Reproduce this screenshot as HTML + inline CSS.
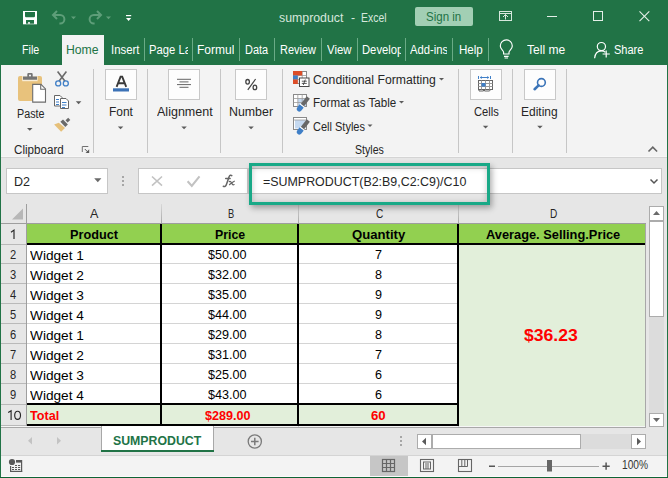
<!DOCTYPE html>
<html><head><meta charset="utf-8">
<style>
*{margin:0;padding:0;box-sizing:border-box}
html,body{width:668px;height:478px;overflow:hidden;background:#e6e6e6;font-family:"Liberation Sans",sans-serif}
.a{position:absolute}
.t{position:absolute;white-space:nowrap;line-height:1}
</style></head><body>
<div class="a" style="left:0px;top:0px;width:668px;height:65px;background:#217346;"></div>
<svg class="a" style="left:0;top:0" width="668" height="65">
 <rect x="23" y="11" width="14" height="13.3" fill="#fff"/>
 <path d="M25 12h10v4.4l-0.8 0.8h-8.4l-0.8-0.8z" fill="#217346"/>
 <rect x="26" y="20" width="8" height="3.7" fill="#217346"/>
 <rect x="28" y="22.2" width="2" height="1.5" fill="#fff"/>
 <g fill="none" stroke="#5e9e79" stroke-width="2">
  <path d="M53 15h7.2a4.2 4.2 0 0 1 0 8.4h-0.8"/>
  <path d="M57 11l-4 4 4 4"/>
  <path d="M101 15h-7.2a4.2 4.2 0 0 0 0 8.4h0.8"/>
  <path d="M97 11l4 4-4 4"/>
 </g>
 <path d="M71 16.5h5l-2.5 2.8z" fill="#5e9e79"/>
 <path d="M106 16.5h5l-2.5 2.8z" fill="#5e9e79"/>
 <rect x="126" y="15" width="5.2" height="1.2" fill="#fff"/>
 <path d="M126 18h5.2l-2.6 3.1z" fill="#fff"/>
 <rect x="499.5" y="11.5" width="12" height="9" fill="none" stroke="#d6e8dd" stroke-width="1"/>
 <path d="M503 17l2.5-2.5 2.5 2.5M505.5 14.5v5" fill="none" stroke="#d6e8dd" stroke-width="1"/>
 <rect x="499.5" y="13" width="12" height="1" fill="#d6e8dd"/>
 <rect x="547" y="16" width="10" height="1" fill="#e4efe8"/>
 <rect x="593.5" y="11.5" width="9" height="9" fill="none" stroke="#e4efe8" stroke-width="1"/>
 <path d="M639.5 11.3l9.8 9.8M649.3 11.3l-9.8 9.8" stroke="#e4efe8" stroke-width="1.1"/>
 <rect x="62" y="35" width="42" height="30" fill="#f3f3f3"/>
 <g fill="#6aab86">
  <rect x="144" y="38" width="1" height="23"/>
  <rect x="192" y="38" width="1" height="23"/>
  <rect x="239" y="38" width="1" height="23"/>
  <rect x="274" y="38" width="1" height="23"/>
  <rect x="321" y="38" width="1" height="23"/>
  <rect x="357" y="38" width="1" height="23"/>
  <rect x="405" y="38" width="1" height="23"/>
  <rect x="452" y="38" width="1" height="23"/>
  <rect x="488" y="38" width="1" height="23"/>
 </g>
 <g fill="none" stroke="#fff" stroke-width="1.15">
  <path d="M503.6 54v-1.8c0-1.6-3.3-3.2-3.3-6.3a6 6 0 0 1 12 0c0 3.1-3.3 4.7-3.3 6.3v1.8z"/>
  <path d="M504 56.3h4.6M504.6 58h3.4"/>
 </g>
 <g fill="none" stroke="#fff" stroke-width="1.2">
  <circle cx="601.4" cy="46.6" r="4.1"/>
  <path d="M594.6 58.2c0.4-4.6 3.2-7.4 6.8-7.4c1.6 0 3 0.5 4 1.4"/>
  <path d="M602.6 54h7.2M606.2 50.4v7.2"/>
 </g>
</svg>
<div class="t" style="left:279px;top:12.00px;font-size:12px;color:#d7e7dd;transform:scaleX(1.0273);transform-origin:0 0;">sumproduct</div>
<div class="t" style="left:351.4px;top:12.00px;font-size:12px;color:#d7e7dd;transform:scaleX(1.0261);transform-origin:0 0;">-</div>
<div class="t" style="left:361.3px;top:12.00px;font-size:12px;color:#d7e7dd;transform:scaleX(0.8690);transform-origin:0 0;">Excel</div>
<div class="a" style="left:415px;top:7px;width:58px;height:19px;background:#a2cfb4;border-radius:2px;"></div>
<div class="t" style="left:426.2px;top:11.00px;font-size:12.5px;color:#217346;transform:scaleX(0.9210);transform-origin:0 0;">Sign&nbsp;in</div>
<div class="t" style="left:21.6px;top:44.00px;font-size:12.5px;color:#fff;transform:scaleX(0.8540);transform-origin:0 0;">File</div>
<div class="t" style="left:66.4px;top:44.00px;font-size:12.5px;color:#217346;transform:scaleX(0.9778);transform-origin:0 0;">Home</div>
<div class="t" style="left:110.5px;top:44.00px;font-size:12.5px;color:#fff;transform:scaleX(0.9085);transform-origin:0 0;">Insert</div>
<div class="a" style="left:149.4px;top:35px;width:38.599999999999994px;height:30px;overflow:hidden"><div class="t" style="left:0px;top:9.00px;font-size:12.5px;color:#fff;transform:scaleX(0.9000);transform-origin:0 0;">Page&nbsp;Layout</div>
</div>
<div class="a" style="left:197.3px;top:35px;width:37.099999999999994px;height:30px;overflow:hidden"><div class="t" style="left:0px;top:9.00px;font-size:12.5px;color:#fff;transform:scaleX(0.9600);transform-origin:0 0;">Formulas</div>
</div>
<div class="t" style="left:245.2px;top:44.00px;font-size:12.5px;color:#fff;transform:scaleX(0.8749);transform-origin:0 0;">Data</div>
<div class="t" style="left:279.6px;top:44.00px;font-size:12.5px;color:#fff;transform:scaleX(0.8759);transform-origin:0 0;">Review</div>
<div class="t" style="left:326.9px;top:44.00px;font-size:12.5px;color:#fff;transform:scaleX(0.9119);transform-origin:0 0;">View</div>
<div class="a" style="left:362.2px;top:35px;width:38.400000000000034px;height:30px;overflow:hidden"><div class="t" style="left:0px;top:9.00px;font-size:12.5px;color:#fff;transform:scaleX(0.9000);transform-origin:0 0;">Developer</div>
</div>
<div class="a" style="left:410.1px;top:35px;width:36.69999999999999px;height:30px;overflow:hidden"><div class="t" style="left:0px;top:9.00px;font-size:12.5px;color:#fff;transform:scaleX(0.9000);transform-origin:0 0;">Add-ins</div>
</div>
<div class="t" style="left:458.8px;top:44.00px;font-size:12.5px;color:#fff;transform:scaleX(0.9258);transform-origin:0 0;">Help</div>
<div class="t" style="left:526.7px;top:44.00px;font-size:12.5px;color:#fff;transform:scaleX(0.9648);transform-origin:0 0;">Tell&nbsp;me</div>
<div class="t" style="left:613.8px;top:44.00px;font-size:12.5px;color:#fff;transform:scaleX(0.8815);transform-origin:0 0;">Share</div>
<div class="a" style="left:1px;top:65px;width:666px;height:92px;background:#f3f3f3;"></div>
<div class="a" style="left:1px;top:156px;width:666px;height:1px;background:#f7f7f7;"></div>
<div class="a" style="left:1px;top:157px;width:666px;height:1px;background:#d4d4d4;"></div>
<div class="a" style="left:93px;top:69px;width:1px;height:84px;background:#c6c6c6;"></div>
<div class="a" style="left:147px;top:69px;width:1px;height:84px;background:#c6c6c6;"></div>
<div class="a" style="left:220px;top:69px;width:1px;height:84px;background:#c6c6c6;"></div>
<div class="a" style="left:282px;top:69px;width:1px;height:84px;background:#c6c6c6;"></div>
<div class="a" style="left:458px;top:69px;width:1px;height:84px;background:#c6c6c6;"></div>
<div class="a" style="left:512px;top:69px;width:1px;height:84px;background:#c6c6c6;"></div>
<div class="a" style="left:566px;top:69px;width:1px;height:84px;background:#c6c6c6;"></div>
<div class="a" style="left:105px;top:69px;width:32px;height:31px;background:#fdfdfd;border:1px solid #c8c8c8;"></div>
<div class="a" style="left:168px;top:69px;width:32px;height:31px;background:#fdfdfd;border:1px solid #c8c8c8;"></div>
<div class="a" style="left:235px;top:69px;width:32px;height:31px;background:#fdfdfd;border:1px solid #c8c8c8;"></div>
<div class="a" style="left:470px;top:69px;width:32px;height:31px;background:#fdfdfd;border:1px solid #c8c8c8;"></div>
<div class="a" style="left:524px;top:69px;width:32px;height:31px;background:#fdfdfd;border:1px solid #c8c8c8;"></div>
<svg class="a" style="left:0;top:0" width="668" height="160">
 <!-- paste -->
 <rect x="18" y="76" width="24" height="25" rx="2" fill="#e8c27c"/>
 <rect x="22.2" y="76" width="15.4" height="5.2" fill="#f7ecd6"/>
 <path d="M23 79.8v-3.4h4.3v-2.2a1.2 1.2 0 0 1 1.2-1.2h3a1.2 1.2 0 0 1 1.2 1.2v2.2h4.3v3.4z" fill="#757575"/>
 <circle cx="30" cy="75.6" r="1" fill="#fff"/>
 <path d="M32.7 84.4h8.3l4.5 4.5v13.2h-12.8z" fill="#fff" stroke="#6d6d6d" stroke-width="1.1"/>
 <path d="M40.7 84.4v4.8h4.8" fill="none" stroke="#6d6d6d" stroke-width="1.1"/>
 <!-- scissors -->
 <path d="M57.6 71.5l7.6 10M66.4 71.5l-7.6 10" stroke="#6a6a6a" stroke-width="1.6" fill="none"/>
 <circle cx="58.2" cy="83.4" r="2.5" fill="#f3f3f3" stroke="#3f7fc7" stroke-width="1.3"/>
 <circle cx="65.8" cy="83.4" r="2.5" fill="#f3f3f3" stroke="#3f7fc7" stroke-width="1.3"/>
 <!-- copy -->
 <path d="M54.5 95.5h5.5l2 2v8.5h-7.5z" fill="#fff" stroke="#666" stroke-width="1"/>
 <path d="M60.5 98.5h5.5l2.5 2.5v7.5h-8z" fill="#fff" stroke="#666" stroke-width="1"/>
 <rect x="56" y="99" width="3" height="1" fill="#3f7fc7"/>
 <rect x="56" y="101.5" width="3" height="1" fill="#3f7fc7"/>
 <rect x="56" y="104" width="3" height="1" fill="#3f7fc7"/>
 <rect x="62" y="102" width="4.5" height="1" fill="#3f7fc7"/>
 <rect x="62" y="104.5" width="4.5" height="1" fill="#3f7fc7"/>
 <rect x="62" y="107" width="3" height="1" fill="#3f7fc7"/>
 <path d="M75.8 101.2h5.6l-2.8 3.1z" fill="#5c5c5c"/>
 <!-- format painter -->
 <path d="M54.1 124.4L58.8 122.8L65 128L61.1 131.7Z" fill="#e6c07a"/>
 <path d="M60.4 121.8L63 119.6L67.9 124.6L65.3 126.9Z" fill="#6a6a6a"/>
 <path d="M65.5 120.2L68.2 117.8L70.3 120L67.6 122.4Z" fill="#6a6a6a"/>
 <!-- paste caret -->
 <path d="M27 128h5.5l-2.75 2.8z" fill="#5c5c5c"/>
 <!-- launcher -->
 <path d="M82.3 152v-5.5h6" fill="none" stroke="#707070" stroke-width="1"/><path d="M89.2 149.3v3.6h-3.6z" fill="#5a5a5a"/><path d="M84.8 149l3.3 3.3" stroke="#5a5a5a" stroke-width="1"/>
 <!-- font A -->
 <path d="M116.6 86.8l4-10.2h1.6l4 10.2M118.4 83.2h6" fill="none" stroke="#3a3a3a" stroke-width="1.9"/>
 <rect x="113" y="88.3" width="16" height="3.2" fill="#3c72b6"/>
 <path d="M117.8 126.5h5.5l-2.75 2.8z" fill="#5c5c5c"/>
 <!-- alignment lines -->
 <path d="M177 79.3h14M179.5 81.9h9M177 84.6h14M179.5 87.3h9" stroke="#555" stroke-width="0.9"/>
 <path d="M181.3 126.5h5.5l-2.75 2.8z" fill="#5c5c5c"/>
 <!-- number % -->
 <path d="M247.8 89.8l7.8-10.8" stroke="#444" stroke-width="1.2"/>
 <ellipse cx="247.6" cy="81.8" rx="1.8" ry="2.3" fill="none" stroke="#444" stroke-width="1.3"/>
 <ellipse cx="254.9" cy="87.4" rx="1.8" ry="2.3" fill="none" stroke="#444" stroke-width="1.3"/>
 <path d="M248.3 126.5h5.5l-2.75 2.8z" fill="#5c5c5c"/>
 <!-- conditional formatting icon -->
 <rect x="293.5" y="71.5" width="13" height="12" fill="#fff" stroke="#8a8a8a" stroke-width="1"/>
 <path d="M297.8 71.5v12M302.2 71.5v12M293.5 75.5h13M293.5 79.5h13" stroke="#9a9a9a" stroke-width="0.8"/>
 <rect x="293" y="71" width="9.2" height="4.5" fill="#dc4d28"/>
 <rect x="293" y="75.5" width="4.8" height="4" fill="#3f7fc7"/>
 <rect x="293" y="79.5" width="4.8" height="4.5" fill="#dc4d28"/>
 <rect x="299.5" y="78" width="9.5" height="8.5" fill="#fff" stroke="#4a4a4a" stroke-width="1"/>
 <path d="M301.8 81.2h5M301.8 83.4h5M303.3 85l2-5.5" stroke="#333" stroke-width="0.8"/>
 <path d="M439 78h5l-2.5 2.6z" fill="#5c5c5c"/>
 <!-- format as table icon -->
 <rect x="293.5" y="94.5" width="13" height="12" fill="#fff" stroke="#8a8a8a" stroke-width="1"/>
 <rect x="298" y="98.5" width="8" height="7.5" fill="#c5d9f0"/>
 <path d="M297.8 94.5v12M302.2 94.5v12M293.5 98.5h13M293.5 102.5h13" stroke="#9a9a9a" stroke-width="0.8"/>
 <g transform="translate(300.5 107.5) rotate(-52)">
  <path d="M-4.5 0c0-2 1.5-2.6 3-2.6h3.5v5.2h-3.5c-1.5 0-3-0.6-3-2.6z" fill="#3f7fc7"/>
  <rect x="2" y="-2.6" width="1.2" height="5.2" fill="#fff"/>
  <rect x="3.2" y="-2" width="9.5" height="4" fill="#686868"/>
 </g>
 <path d="M399 101h5l-2.5 2.6z" fill="#5c5c5c"/>
 <!-- cell styles icon -->
 <rect x="293.5" y="117.5" width="13" height="12" fill="#fff" stroke="#8a8a8a" stroke-width="1"/>
 <rect x="295" y="120" width="10.5" height="8.5" fill="#c5d9f0"/>
 <path d="M293.5 120h13" stroke="#9a9a9a" stroke-width="0.8"/>
 <g transform="translate(300.5 130.5) rotate(-52)">
  <path d="M-4.5 0c0-2 1.5-2.6 3-2.6h3.5v5.2h-3.5c-1.5 0-3-0.6-3-2.6z" fill="#3f7fc7"/>
  <rect x="2" y="-2.6" width="1.2" height="5.2" fill="#fff"/>
  <rect x="3.2" y="-2" width="9.5" height="4" fill="#686868"/>
 </g>
 <path d="M367.5 124.5h5l-2.5 2.6z" fill="#5c5c5c"/>
 <!-- cells icon -->
 <path d="M478.5 76v3M490.5 76v3M480.5 77.5h8" stroke="#3f7fc7" stroke-width="1"/>
 <path d="M479.8 77.5l2-1.6v3.2zM489.2 77.5l-2-1.6v3.2z" fill="#3f7fc7"/>
 <rect x="478.5" y="80.5" width="14" height="9" fill="#fff" stroke="#666" stroke-width="1"/>
 <path d="M481.5 80.5v9M485.5 80.5v9M489.5 80.5v9M478.5 83.5h14M478.5 86.5h14" stroke="#9a9a9a" stroke-width="1"/>
 <rect x="481.5" y="83" width="4" height="3.6" fill="#3f7fc7"/>
 <path d="M479 89.5v1.5h4.5v-1.5M484.5 89.5v1.5h5l1-1.5" fill="none" stroke="#666" stroke-width="1"/>
 <path d="M482.8 125.8h5.5l-2.75 2.8z" fill="#5c5c5c"/>
 <!-- editing magnifier -->
 <circle cx="541.4" cy="82.5" r="3.9" fill="none" stroke="#3b74b8" stroke-width="1.6"/>
 <path d="M538.6 85.4l-4 3.8" stroke="#3b74b8" stroke-width="2.6" stroke-linecap="round"/>
 <path d="M537.2 125.8h5.5l-2.75 2.8z" fill="#5c5c5c"/>
 <!-- collapse -->
 <path d="M648.5 151.5l4.3-4.3 4.3 4.3" fill="none" stroke="#666" stroke-width="1.6"/>
</svg>
<div class="t" style="left:16.5px;top:108.00px;font-size:12.5px;color:#262626;transform:scaleX(0.8604);transform-origin:0 0;">Paste</div>
<div class="t" style="left:13.5px;top:144.00px;font-size:12.5px;color:#262626;transform:scaleX(0.9290);transform-origin:0 0;">Clipboard</div>
<div class="t" style="left:109.2px;top:106.00px;font-size:12.5px;color:#262626;transform:scaleX(0.9556);transform-origin:0 0;">Font</div>
<div class="t" style="left:156.5px;top:106.00px;font-size:12.5px;color:#262626;transform:scaleX(1.0021);transform-origin:0 0;">Alignment</div>
<div class="t" style="left:229.2px;top:106.00px;font-size:12.5px;color:#262626;transform:scaleX(0.9898);transform-origin:0 0;">Number</div>
<div class="t" style="left:312.9px;top:74.00px;font-size:12.5px;color:#262626;transform:scaleX(0.9766);transform-origin:0 0;">Conditional&nbsp;Formatting</div>
<div class="t" style="left:312.9px;top:97.00px;font-size:12.5px;color:#262626;transform:scaleX(0.9286);transform-origin:0 0;">Format&nbsp;as&nbsp;Table</div>
<div class="t" style="left:312.9px;top:121.00px;font-size:12.5px;color:#262626;transform:scaleX(0.8807);transform-origin:0 0;">Cell&nbsp;Styles</div>
<div class="t" style="left:354.9px;top:144.00px;font-size:12.5px;color:#262626;transform:scaleX(0.8461);transform-origin:0 0;">Styles</div>
<div class="t" style="left:473.5px;top:106.00px;font-size:12.5px;color:#262626;transform:scaleX(0.8926);transform-origin:0 0;">Cells</div>
<div class="t" style="left:521.1px;top:106.00px;font-size:12.5px;color:#262626;transform:scaleX(0.9576);transform-origin:0 0;">Editing</div>
<div class="a" style="left:1px;top:158px;width:666px;height:47px;background:#e6e6e6;"></div>
<div class="a" style="left:6px;top:168px;width:102px;height:26px;background:#fff;border:1px solid #c6c6c6;"></div>
<div class="t" style="left:13.5px;top:175.00px;font-size:13px;color:#262626;transform:scaleX(0.9628);transform-origin:0 0;">D2</div>
<svg class="a" style="left:0;top:157px" width="668" height="48">
 <path d="M94.2 21.3h7.2l-3.6 4z" fill="#6a6a6a"/>
 <rect x="122" y="19" width="2" height="2" fill="#a6a6a6"/>
 <rect x="122" y="23" width="2" height="2" fill="#a6a6a6"/>
 <rect x="122" y="27" width="2" height="2" fill="#a6a6a6"/>
</svg>
<div class="a" style="left:138px;top:168px;width:110px;height:26px;background:#fff;border:1px solid #c6c6c6;"></div>
<svg class="a" style="left:0;top:157px" width="668" height="48">
 <path d="M152 19.5l10 9.2M162 19.5l-10 9.2" stroke="#c2c2c2" stroke-width="1.6"/>
 <path d="M187.6 24.3l4.2 4.6 7.7-9.6" fill="none" stroke="#c2c2c2" stroke-width="2.1"/>
</svg>
<svg class="a" style="left:0;top:0" width="668" height="200"><g fill="none" stroke="#666" stroke-linecap="round"><path d="M223.3 186.3c1.3 0.6 2.6 0 3.2-2l2.6-7.6c0.6-1.6 1.8-1.9 2.7-1.1" stroke-width="1.5"/><path d="M225.6 178.5h4.6" stroke-width="1.3"/><path d="M229.3 181.6c0.9-0.5 1.5 0 1.9 0.8l1.3 2c0.4 0.6 1 0.6 1.6 0.2M234.3 181.2c-1.8 0.8-3.2 2.2-4.8 3.5" stroke-width="1.25"/></g></svg>
<div class="a" style="left:248px;top:168px;width:414px;height:26px;background:#fff;border:1px solid #c6c6c6;"></div>
<div class="t" style="left:263.2px;top:175.00px;font-size:13px;color:#262626;transform:scaleX(0.9556);transform-origin:0 0;">=SUMPRODUCT(B2:B9,C2:C9)/C10</div>
<svg class="a" style="left:640px;top:170px" width="25" height="22"><path d="M10.5 9.5l3.5 3.5 3.5-3.5" fill="none" stroke="#555" stroke-width="1.5"/></svg>
<div class="a" style="left:1px;top:204px;width:645px;height:20px;background:#e6e6e6;"></div>
<div class="a" style="left:1px;top:224px;width:26px;height:203px;background:#e6e6e6;"></div>
<div class="a" style="left:27px;top:224px;width:618px;height:203px;background:#fff;"></div>
<svg class="a" style="left:0;top:204px" width="30" height="20"><path d="M23 4.5v11h-11z" fill="#b7b7b7"/></svg>
<div class="a" style="left:1px;top:223px;width:645px;height:1px;background:#9e9e9e;"></div>
<div class="a" style="left:26px;top:204px;width:1px;height:223px;background:#9e9e9e;"></div>
<div class="a" style="left:27px;top:426px;width:618px;height:1px;background:#fff;"></div>
<div class="a" style="left:161px;top:204px;width:1px;height:19px;background:linear-gradient(#d8d8d8,#a9a9a9);"></div>
<div class="a" style="left:298px;top:204px;width:1px;height:19px;background:linear-gradient(#d8d8d8,#a9a9a9);"></div>
<div class="a" style="left:458px;top:204px;width:1px;height:19px;background:linear-gradient(#d8d8d8,#a9a9a9);"></div>
<div class="t" style="left:89.9px;top:207.00px;font-size:13px;color:#262626;transform:scaleX(0.9687);transform-origin:0 0;">A</div>
<div class="t" style="left:227.6px;top:207.00px;font-size:13px;color:#262626;transform:scaleX(0.7150);transform-origin:0 0;">B</div>
<div class="t" style="left:375.75px;top:207.00px;font-size:13px;color:#262626;transform:scaleX(0.7776);transform-origin:0 0;">C</div>
<div class="t" style="left:549.65px;top:207.00px;font-size:13px;color:#262626;transform:scaleX(0.7776);transform-origin:0 0;">D</div>
<div class="a" style="left:1px;top:244px;width:25px;height:1px;background:#b9b9b9;"></div>
<div class="a" style="left:1px;top:263px;width:25px;height:1px;background:#b9b9b9;"></div>
<div class="a" style="left:1px;top:283px;width:25px;height:1px;background:#b9b9b9;"></div>
<div class="a" style="left:1px;top:303px;width:25px;height:1px;background:#b9b9b9;"></div>
<div class="a" style="left:1px;top:323px;width:25px;height:1px;background:#b9b9b9;"></div>
<div class="a" style="left:1px;top:343px;width:25px;height:1px;background:#b9b9b9;"></div>
<div class="a" style="left:1px;top:363px;width:25px;height:1px;background:#b9b9b9;"></div>
<div class="a" style="left:1px;top:383px;width:25px;height:1px;background:#b9b9b9;"></div>
<div class="a" style="left:1px;top:404px;width:25px;height:1px;background:#b9b9b9;"></div>
<div class="a" style="left:1px;top:425px;width:25px;height:1px;background:#b9b9b9;"></div>
<div class="a" style="left:1px;top:426px;width:645px;height:1px;background:#f6f6f6;"></div>
<div class="a" style="left:1px;top:427px;width:645px;height:1px;background:#a8a8a8;"></div>
<div class="a" style="left:27px;top:224px;width:618px;height:19px;background:#92d050;"></div>
<div class="a" style="left:27px;top:263px;width:431px;height:1px;background:#d4d4d4;"></div>
<div class="a" style="left:27px;top:283px;width:431px;height:1px;background:#d4d4d4;"></div>
<div class="a" style="left:27px;top:303px;width:431px;height:1px;background:#d4d4d4;"></div>
<div class="a" style="left:27px;top:323px;width:431px;height:1px;background:#d4d4d4;"></div>
<div class="a" style="left:27px;top:343px;width:431px;height:1px;background:#d4d4d4;"></div>
<div class="a" style="left:27px;top:363px;width:431px;height:1px;background:#d4d4d4;"></div>
<div class="a" style="left:27px;top:383px;width:431px;height:1px;background:#d4d4d4;"></div>
<div class="a" style="left:27px;top:403px;width:431px;height:1px;background:#d4d4d4;"></div>
<div class="a" style="left:27px;top:423px;width:431px;height:1px;background:#d4d4d4;"></div>
<div class="a" style="left:161px;top:224px;width:1px;height:203px;background:#d4d4d4;"></div>
<div class="a" style="left:298px;top:224px;width:1px;height:203px;background:#d4d4d4;"></div>
<div class="a" style="left:458px;top:224px;width:1px;height:203px;background:#d4d4d4;"></div>
<div class="a" style="left:645px;top:224px;width:1px;height:203px;background:#a8a8a8;"></div>
<div class="a" style="left:27px;top:405px;width:431px;height:19px;background:#e2efda;"></div>
<div class="a" style="left:459px;top:245px;width:186px;height:181px;background:#e2efda;"></div>
<div class="a" style="left:27px;top:243px;width:618px;height:2px;background:#000;"></div>
<div class="a" style="left:27px;top:403px;width:431px;height:2px;background:#000;"></div>
<div class="a" style="left:27px;top:424px;width:431px;height:2px;background:#000;"></div>
<div class="a" style="left:160px;top:224px;width:2px;height:202px;background:#000;"></div>
<div class="a" style="left:297px;top:224px;width:2px;height:202px;background:#000;"></div>
<div class="a" style="left:457px;top:224px;width:2px;height:202px;background:#000;"></div>
<div class="t" style="left:10.4px;top:248.00px;font-size:13px;color:#262626;transform:scaleX(0.8576);transform-origin:0 0;">2</div>
<div class="t" style="left:10.4px;top:268.00px;font-size:13px;color:#262626;transform:scaleX(0.8576);transform-origin:0 0;">3</div>
<div class="t" style="left:10.4px;top:288.00px;font-size:13px;color:#262626;transform:scaleX(0.8576);transform-origin:0 0;">4</div>
<div class="t" style="left:10.4px;top:308.00px;font-size:13px;color:#262626;transform:scaleX(0.8576);transform-origin:0 0;">5</div>
<div class="t" style="left:10.4px;top:328.00px;font-size:13px;color:#262626;transform:scaleX(0.8576);transform-origin:0 0;">6</div>
<div class="t" style="left:10.4px;top:348.00px;font-size:13px;color:#262626;transform:scaleX(0.8576);transform-origin:0 0;">7</div>
<div class="t" style="left:10.4px;top:368.00px;font-size:13px;color:#262626;transform:scaleX(0.8576);transform-origin:0 0;">8</div>
<div class="t" style="left:10.4px;top:388.00px;font-size:13px;color:#262626;transform:scaleX(0.8576);transform-origin:0 0;">9</div>
<svg class="a" style="left:0;top:224px" width="26" height="202"><g fill="none" stroke="#262626" stroke-width="1.15"><path d="M11 8.2L14 6.1V14.9"/><path d="M8.2 188.5L11.1 186.7V195.9"/><ellipse cx="17.6" cy="191.3" rx="2.9" ry="4.1"/></g></svg>
<div class="t" style="left:70.0px;top:228.00px;font-size:13px;color:#000;font-weight:bold;transform:scaleX(0.9774);transform-origin:0 0;">Product</div>
<div class="t" style="left:214.9px;top:228.00px;font-size:13px;color:#000;font-weight:bold;transform:scaleX(0.9496);transform-origin:0 0;">Price</div>
<div class="t" style="left:351.9px;top:228.00px;font-size:13px;color:#000;font-weight:bold;transform:scaleX(1.0091);transform-origin:0 0;">Quantity</div>
<div class="t" style="left:486.1px;top:228.00px;font-size:13px;color:#000;font-weight:bold;transform:scaleX(0.9862);transform-origin:0 0;">Average.&nbsp;Selling.Price</div>
<div class="t" style="left:29.6px;top:249.00px;font-size:13px;color:#000;transform:scaleX(1.0507);transform-origin:0 0;">Widget&nbsp;1</div>
<div class="t" style="left:208.05px;top:248.00px;font-size:13px;color:#000;transform:scaleX(0.9684);transform-origin:0 0;">$50.00</div>
<div class="t" style="left:375.1px;top:248.00px;font-size:13px;color:#000;transform:scaleX(0.9683);transform-origin:0 0;">7</div>
<div class="t" style="left:29.6px;top:269.00px;font-size:13px;color:#000;transform:scaleX(1.0507);transform-origin:0 0;">Widget&nbsp;2</div>
<div class="t" style="left:208.05px;top:268.00px;font-size:13px;color:#000;transform:scaleX(0.9684);transform-origin:0 0;">$32.00</div>
<div class="t" style="left:375.1px;top:268.00px;font-size:13px;color:#000;transform:scaleX(0.9683);transform-origin:0 0;">8</div>
<div class="t" style="left:29.6px;top:289.00px;font-size:13px;color:#000;transform:scaleX(1.0507);transform-origin:0 0;">Widget&nbsp;3</div>
<div class="t" style="left:208.05px;top:288.00px;font-size:13px;color:#000;transform:scaleX(0.9684);transform-origin:0 0;">$35.00</div>
<div class="t" style="left:375.1px;top:288.00px;font-size:13px;color:#000;transform:scaleX(0.9683);transform-origin:0 0;">9</div>
<div class="t" style="left:29.6px;top:309.00px;font-size:13px;color:#000;transform:scaleX(1.0507);transform-origin:0 0;">Widget&nbsp;4</div>
<div class="t" style="left:208.05px;top:308.00px;font-size:13px;color:#000;transform:scaleX(0.9684);transform-origin:0 0;">$44.00</div>
<div class="t" style="left:375.1px;top:308.00px;font-size:13px;color:#000;transform:scaleX(0.9683);transform-origin:0 0;">9</div>
<div class="t" style="left:29.6px;top:329.00px;font-size:13px;color:#000;transform:scaleX(1.0507);transform-origin:0 0;">Widget&nbsp;1</div>
<div class="t" style="left:208.05px;top:328.00px;font-size:13px;color:#000;transform:scaleX(0.9684);transform-origin:0 0;">$29.00</div>
<div class="t" style="left:375.1px;top:328.00px;font-size:13px;color:#000;transform:scaleX(0.9683);transform-origin:0 0;">8</div>
<div class="t" style="left:29.6px;top:349.00px;font-size:13px;color:#000;transform:scaleX(1.0507);transform-origin:0 0;">Widget&nbsp;2</div>
<div class="t" style="left:208.05px;top:348.00px;font-size:13px;color:#000;transform:scaleX(0.9684);transform-origin:0 0;">$31.00</div>
<div class="t" style="left:375.1px;top:348.00px;font-size:13px;color:#000;transform:scaleX(0.9683);transform-origin:0 0;">7</div>
<div class="t" style="left:29.6px;top:369.00px;font-size:13px;color:#000;transform:scaleX(1.0507);transform-origin:0 0;">Widget&nbsp;3</div>
<div class="t" style="left:208.05px;top:368.00px;font-size:13px;color:#000;transform:scaleX(0.9684);transform-origin:0 0;">$25.00</div>
<div class="t" style="left:375.1px;top:368.00px;font-size:13px;color:#000;transform:scaleX(0.9683);transform-origin:0 0;">6</div>
<div class="t" style="left:29.6px;top:389.00px;font-size:13px;color:#000;transform:scaleX(1.0507);transform-origin:0 0;">Widget&nbsp;4</div>
<div class="t" style="left:208.05px;top:388.00px;font-size:13px;color:#000;transform:scaleX(0.9684);transform-origin:0 0;">$43.00</div>
<div class="t" style="left:375.1px;top:388.00px;font-size:13px;color:#000;transform:scaleX(0.9683);transform-origin:0 0;">6</div>
<div class="t" style="left:29.7px;top:409.00px;font-size:13px;color:#ff0000;font-weight:bold;transform:scaleX(0.9706);transform-origin:0 0;">Total</div>
<div class="t" style="left:205.45px;top:409.00px;font-size:13px;color:#ff0000;font-weight:bold;transform:scaleX(0.9684);transform-origin:0 0;">$289.00</div>
<div class="t" style="left:371.45px;top:409.00px;font-size:13px;color:#ff0000;font-weight:bold;transform:scaleX(1.0167);transform-origin:0 0;">60</div>
<div class="t" style="left:524.15px;top:328.00px;font-size:16px;color:#ff0000;font-weight:bold;transform:scaleX(1.0974);transform-origin:0 0;">$36.23</div>
<div class="a" style="left:646px;top:204px;width:21px;height:223px;background:#e6e6e6;"></div>
<div class="a" style="left:649px;top:206px;width:15px;height:221px;background:#dcdcdc;"></div>
<div class="a" style="left:649px;top:206px;width:15px;height:15px;background:#fff;border:1px solid #acacac;"></div>
<div class="a" style="left:649px;top:221px;width:15px;height:96px;background:#fff;border:1px solid #acacac;"></div>
<div class="a" style="left:649px;top:413px;width:15px;height:14px;background:#fff;border:1px solid #acacac;"></div>
<svg class="a" style="left:640px;top:200px" width="28" height="230"><path d="M13 15h7l-3.5-4z" fill="#6a6a6a"/><path d="M13 218h7l-3.5 4z" fill="#6a6a6a"/></svg>
<div class="a" style="left:646px;top:427px;width:21px;height:28px;background:#e6e6e6;"></div>
<div class="a" style="left:1px;top:428px;width:645px;height:27px;background:#e6e6e6;"></div>
<svg class="a" style="left:0;top:427px" width="668" height="28"><path d="M32 10v7.5l-4-3.75z" fill="#c3c3c3"/><path d="M57 10v7.5l4-3.75z" fill="#c3c3c3"/><circle cx="254.8" cy="14.5" r="6.6" fill="none" stroke="#7a7a7a" stroke-width="1.3"/><path d="M251 14.5h7.6M254.8 10.7v7.6" stroke="#7a7a7a" stroke-width="1.5"/></svg>
<div class="a" style="left:101px;top:426px;width:113px;height:26px;background:#fff;border-left:1px solid #a8a8a8;border-right:1px solid #a8a8a8;"></div>
<div class="a" style="left:101px;top:450px;width:113px;height:2px;background:#217346;"></div>
<div class="t" style="left:113.3px;top:434.00px;font-size:13px;color:#217346;font-weight:bold;transform:scaleX(0.9467);transform-origin:0 0;">SUMPRODUCT</div>
<svg class="a" style="left:398px;top:434px" width="10" height="16"><rect x="2" y="2" width="2" height="2" fill="#a6a6a6"/><rect x="2" y="6" width="2" height="2" fill="#a6a6a6"/><rect x="2" y="10" width="2" height="2" fill="#a6a6a6"/></svg>
<div class="a" style="left:417px;top:434px;width:229px;height:15px;background:#dcdcdc;"></div>
<div class="a" style="left:417px;top:434px;width:15px;height:15px;background:#fff;border:1px solid #acacac;"></div>
<div class="a" style="left:432px;top:434px;width:149px;height:15px;background:#fff;border:1px solid #acacac;"></div>
<div class="a" style="left:631px;top:434px;width:15px;height:15px;background:#fff;border:1px solid #acacac;"></div>
<svg class="a" style="left:417px;top:434px" width="230" height="15"><path d="M9 3.8v7.4l-4-3.7z" fill="#5a5a5a"/><path d="M220 3.8v7.4l4-3.7z" fill="#5a5a5a"/></svg>
<div class="a" style="left:1px;top:455px;width:666px;height:22px;background:#f3f3f3;"></div>
<div class="a" style="left:1px;top:455px;width:666px;height:1px;background:#d4d4d4;"></div>
<div class="a" style="left:370px;top:456px;width:38px;height:21px;background:#c6c6c6;"></div>
<svg class="a" style="left:0;top:455px" width="668" height="23">
 <circle cx="12" cy="7" r="3.1" fill="#595959"/>
 <rect x="16" y="5" width="6" height="2.6" fill="#595959"/>
 <rect x="21" y="5" width="1.2" height="12" fill="#595959"/>
 <rect x="10" y="11" width="1.2" height="6" fill="#595959"/>
 <rect x="10" y="15.8" width="12.2" height="1.2" fill="#595959"/>
 <path d="M15 10.5h2M18 10.5h2.2M12 12.5h2M15 12.5h2M18 12.5h2.2M12 14.5h2M15 14.5h2M18 14.5h2.2" stroke="#595959" stroke-width="1.1"/>
 <rect x="382.5" y="4.5" width="12" height="12" fill="none" stroke="#666" stroke-width="1.2"/>
 <path d="M386.5 4.5v12M390.5 4.5v12M382.5 8.5h12M382.5 12.5h12" stroke="#666" stroke-width="1.2"/>
 <rect x="420.5" y="4.5" width="13" height="12" fill="none" stroke="#666" stroke-width="1.1"/>
 <rect x="423.5" y="7" width="7" height="7" fill="none" stroke="#666" stroke-width="1"/>
 <path d="M425 9h4M425 11h4M425 13h4" stroke="#666" stroke-width="1"/>
 <rect x="458.5" y="4.5" width="13" height="12" fill="none" stroke="#666" stroke-width="1.1"/>
 <path d="M458.5 11.5h9v-7M461.8 4.5v7M464.8 4.5v7" fill="none" stroke="#666" stroke-width="1"/>
 <rect x="489" y="10.5" width="6" height="1.5" fill="#555"/>
 <rect x="498" y="11" width="101" height="1" fill="#a5a5a5"/>
 <rect x="547" y="5" width="5" height="11.5" fill="#666"/>
 <path d="M602.5 11.2h7.2M606.1 7.6v7.2" stroke="#555" stroke-width="1.5"/>
</svg>
<div class="t" style="left:621.9px;top:459.00px;font-size:12.5px;color:#333;transform:scaleX(0.8164);transform-origin:0 0;">100%</div>
<div class="a" style="left:0px;top:65px;width:1px;height:413px;background:#217346;"></div>
<div class="a" style="left:667px;top:65px;width:1px;height:413px;background:#217346;"></div>
<div class="a" style="left:1px;top:476px;width:666px;height:1px;background:#fbfbfb;"></div>
<div class="a" style="left:0px;top:477px;width:668px;height:1px;background:#0e6334;"></div>
<div class="a" style="left:249px;top:163px;width:241px;height:42px;background:transparent;border:3px solid #19a987;box-shadow:2px 3px 6px rgba(0,0,0,0.32), inset 0 1px 6px rgba(0,0,0,0.22);"></div>
</body></html>
